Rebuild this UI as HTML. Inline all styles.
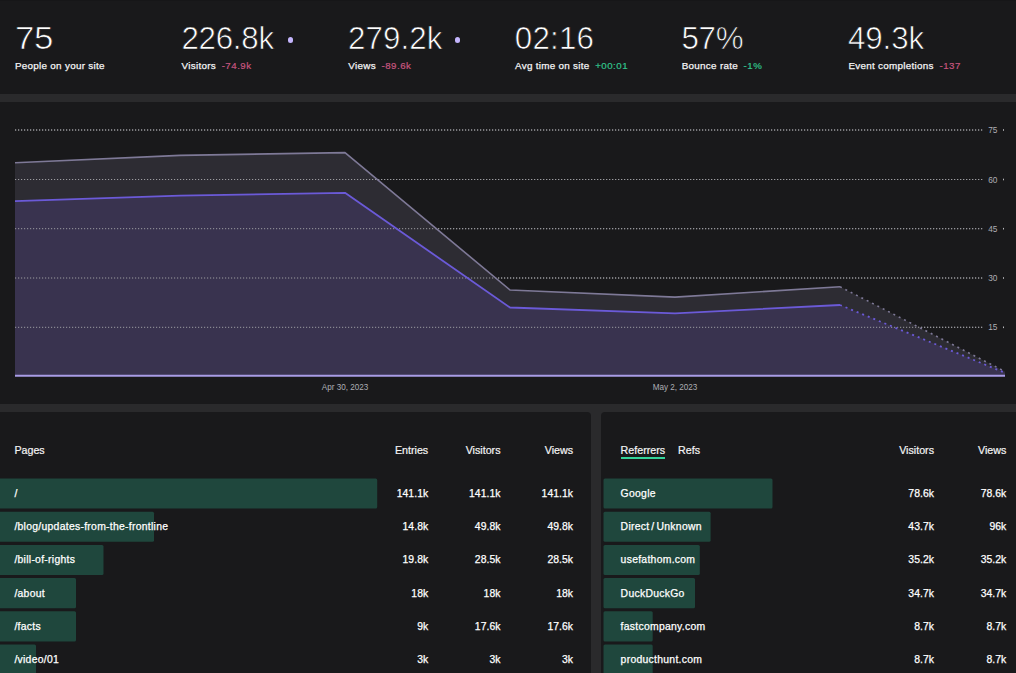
<!DOCTYPE html>
<html><head><meta charset="utf-8"><title>Dashboard</title>
<style>
html,body{margin:0;padding:0;background:#2a2a2c;}
body{width:1016px;height:673px;position:relative;overflow:hidden;font-family:"Liberation Sans",sans-serif;color:#fff;}
.panel{position:absolute;background:#19191b;}
.m{position:absolute;top:0;white-space:nowrap}
.n{position:absolute;left:0;top:20.5px;font-size:31.3px;line-height:36px;color:#fff;letter-spacing:-0.3px;-webkit-text-stroke:0.7px #19191b;paint-order:fill stroke}
.l{position:absolute;left:0.5px;top:58.7px;font-size:9.9px;letter-spacing:0.28px;line-height:14px;color:#f4f4f5;-webkit-text-stroke:0.25px #f4f4f5}
.l span{margin-left:2.57px;font-size:9.7px;letter-spacing:0.5px}
.neg{color:#c6557f;-webkit-text-stroke:0.2px #c6557f}
.pos{color:#31c48d;-webkit-text-stroke:0.2px #31c48d}
.dot{position:absolute;left:106.8px;top:37px;width:5.6px;height:5.6px;border-radius:50%;background:#c4b5fd}
svg text{font-family:"Liberation Sans",sans-serif}
.bar{position:absolute;height:30px;background:#1f473d;border-radius:0 1.5px 1.5px 0}
.t{position:absolute;height:30px;line-height:30px;font-size:10.4px;letter-spacing:0.28px;word-spacing:-1.2px;color:#fff;white-space:nowrap;-webkit-text-stroke:0.25px #fff;margin-top:0.6px}
.v{letter-spacing:0.05px}
.th{position:absolute;top:443px;line-height:14px;font-size:10.7px;color:#f4f4f5;white-space:nowrap;-webkit-text-stroke:0.2px #f4f4f5}
</style></head><body>
<div class="panel" style="left:0;top:0;width:1016px;height:94px;border-top:1px solid #161618;box-sizing:border-box"></div>
<div class="panel" style="left:0;top:102px;width:1016px;height:302px"></div>
<div class="panel" style="left:0;top:412px;width:590.8px;height:270px;border-radius:0 4px 0 0"></div>
<div class="panel" style="left:601px;top:412px;width:420px;height:270px;border-radius:4px 0 0 0"></div>
<div class="m" style="left:14.4px"><div class="n" style="letter-spacing:-0.3px;margin-left:0.3px;transform:scaleX(1.115);transform-origin:0 0">75</div><div class="l">People on your site</div></div><div class="m" style="left:181.1px"><div class="n" style="letter-spacing:-0.25px;margin-left:0.3px">226.8k</div><i class=dot></i><div class="l">Visitors <span class=neg>-74.9k</span></div></div><div class="m" style="left:347.8px"><div class="n" style="letter-spacing:0.1px;margin-left:0.2px">279.2k</div><i class=dot></i><div class="l">Views <span class=neg>-89.6k</span></div></div><div class="m" style="left:514.5px"><div class="n" style="letter-spacing:0.2px;margin-left:0.3px">02:16</div><div class="l">Avg time on site <span class=pos>+00:01</span></div></div><div class="m" style="left:681.2px"><div class="n" style="letter-spacing:-0.3px;margin-left:0.3px">57%</div><div class="l">Bounce rate <span class=pos>-1%</span></div></div><div class="m" style="left:847.9px"><div class="n" style="letter-spacing:-0.1px;margin-left:0.1px">49.3k</div><div class="l">Event completions <span class=neg>-137</span></div></div>
<svg class="chart" width="1016" height="302" viewBox="0 102 1016 302" style="position:absolute;left:0;top:102px"><line x1="15" x2="984" y1="130" y2="130" stroke="#9c9ca0" stroke-width="1" stroke-dasharray="1.2 1.8"/><text x="997.4" y="133" text-anchor="end" font-size="8.3" fill="#aeaeb4">75</text><rect x="1003" y="129.2" width="1" height="1.6" fill="#b8b8bc"/><line x1="15" x2="984" y1="179.5" y2="179.5" stroke="#9c9ca0" stroke-width="1" stroke-dasharray="1.2 1.8"/><text x="997.4" y="182.5" text-anchor="end" font-size="8.3" fill="#aeaeb4">60</text><rect x="1003" y="178.7" width="1" height="1.6" fill="#b8b8bc"/><line x1="15" x2="984" y1="228.7" y2="228.7" stroke="#9c9ca0" stroke-width="1" stroke-dasharray="1.2 1.8"/><text x="997.4" y="231.7" text-anchor="end" font-size="8.3" fill="#aeaeb4">45</text><rect x="1003" y="227.89999999999998" width="1" height="1.6" fill="#b8b8bc"/><line x1="15" x2="984" y1="278" y2="278" stroke="#9c9ca0" stroke-width="1" stroke-dasharray="1.2 1.8"/><text x="997.4" y="281" text-anchor="end" font-size="8.3" fill="#aeaeb4">30</text><rect x="1003" y="277.2" width="1" height="1.6" fill="#b8b8bc"/><line x1="15" x2="984" y1="327.3" y2="327.3" stroke="#9c9ca0" stroke-width="1" stroke-dasharray="1.2 1.8"/><text x="997.4" y="330.3" text-anchor="end" font-size="8.3" fill="#aeaeb4">15</text><rect x="1003" y="326.5" width="1" height="1.6" fill="#b8b8bc"/><polygon points="15,162.8 180,155.4 345,152.6 510,290 675,297.1 840,286.7 1005,371.5 1005,375.8 15,375.8" fill="#2d2c33"/><polygon points="15,201.2 180,195.6 345,192.8 510,307.5 675,313.4 840,305 1005,372.8 1005,375.8 15,375.8" fill="#39334f"/><line x1="15" x2="984" y1="130" y2="130" stroke="#9c9ca0" stroke-width="1" stroke-dasharray="1.2 1.8"/><line x1="15" x2="984" y1="179.5" y2="179.5" stroke="#9c9ca0" stroke-width="1" stroke-dasharray="1.2 1.8"/><line x1="15" x2="984" y1="228.7" y2="228.7" stroke="#9c9ca0" stroke-width="1" stroke-dasharray="1.2 1.8"/><line x1="15" x2="984" y1="278" y2="278" stroke="#9c9ca0" stroke-width="1" stroke-dasharray="1.2 1.8"/><line x1="15" x2="984" y1="327.3" y2="327.3" stroke="#9c9ca0" stroke-width="1" stroke-dasharray="1.2 1.8"/><polyline points="15,162.8 180,155.4 345,152.6 510,290 675,297.1 840,286.7" fill="none" stroke="#7e7997" stroke-width="1.6" stroke-linejoin="round"/><polyline points="840,286.7 1005,371.5" fill="none" stroke="#7e7997" stroke-width="1.6" stroke-dasharray="2 4"/><polyline points="15,201.2 180,195.6 345,192.8 510,307.5 675,313.4 840,305" fill="none" stroke="#6b5ad8" stroke-width="1.8" stroke-linejoin="round"/><polyline points="840,305 1005,372.8" fill="none" stroke="#6b5ad8" stroke-width="1.8" stroke-dasharray="2 4"/><line x1="15" x2="1005" y1="375.8" y2="375.8" stroke="#a99ce6" stroke-width="2"/><text x="345" y="390" text-anchor="middle" font-size="8.15" fill="#aeaeb4">Apr 30, 2023</text><text x="675" y="390" text-anchor="middle" font-size="8.15" fill="#aeaeb4">May 2, 2023</text></svg>
<div class="th" style="left:14.4px">Pages</div>
<div class="th" style="right:587.8px">Entries</div>
<div class="th" style="right:515.5px">Visitors</div>
<div class="th" style="right:442.9px">Views</div>
<div class="th" style="left:620.6px">Referrers</div>
<div style="position:absolute;left:620.6px;top:456.7px;width:44.4px;height:2px;background:#34d399"></div>
<div class="th" style="left:678px">Refs</div>
<div class="th" style="right:82.0px">Visitors</div>
<div class="th" style="right:9.7px">Views</div>
<svg width="1016" height="673" style="position:absolute;left:0;top:0" fill="#1f473d"><rect x="-3" y="478.5" width="380.2" height="30.1" rx="1.5"/><rect x="-3" y="511.7" width="157" height="30.1" rx="1.5"/><rect x="-3" y="544.9" width="106.5" height="30.1" rx="1.5"/><rect x="-3" y="578.1" width="79" height="30.1" rx="1.5"/><rect x="-3" y="611.3" width="79" height="30.1" rx="1.5"/><rect x="-3" y="644.5" width="39" height="30.1" rx="1.5"/><rect x="603.5" y="478.5" width="169.0" height="30.1" rx="1.5"/><rect x="603.5" y="511.7" width="107.1" height="30.1" rx="1.5"/><rect x="603.5" y="544.9" width="96.3" height="30.1" rx="1.5"/><rect x="603.5" y="578.1" width="91.5" height="30.1" rx="1.5"/><rect x="603.5" y="611.3" width="49.2" height="30.1" rx="1.5"/><rect x="603.5" y="644.5" width="49.2" height="30.1" rx="1.5"/></svg>
<div class="t" style="left:14.4px;top:478.5px">/</div><div class="t v" style="right:587.8px;top:478.5px">141.1k</div><div class="t v" style="right:515.5px;top:478.5px">141.1k</div><div class="t v" style="right:442.9px;top:478.5px">141.1k</div><div class="t" style="left:14.4px;top:511.7px">/blog/updates-from-the-frontline</div><div class="t v" style="right:587.8px;top:511.7px">14.8k</div><div class="t v" style="right:515.5px;top:511.7px">49.8k</div><div class="t v" style="right:442.9px;top:511.7px">49.8k</div><div class="t" style="left:14.4px;top:544.9px">/bill-of-rights</div><div class="t v" style="right:587.8px;top:544.9px">19.8k</div><div class="t v" style="right:515.5px;top:544.9px">28.5k</div><div class="t v" style="right:442.9px;top:544.9px">28.5k</div><div class="t" style="left:14.4px;top:578.1px">/about</div><div class="t v" style="right:587.8px;top:578.1px">18k</div><div class="t v" style="right:515.5px;top:578.1px">18k</div><div class="t v" style="right:442.9px;top:578.1px">18k</div><div class="t" style="left:14.4px;top:611.3px">/facts</div><div class="t v" style="right:587.8px;top:611.3px">9k</div><div class="t v" style="right:515.5px;top:611.3px">17.6k</div><div class="t v" style="right:442.9px;top:611.3px">17.6k</div><div class="t" style="left:14.4px;top:644.5px">/video/01</div><div class="t v" style="right:587.8px;top:644.5px">3k</div><div class="t v" style="right:515.5px;top:644.5px">3k</div><div class="t v" style="right:442.9px;top:644.5px">3k</div><div class="t" style="left:620.6px;top:478.5px">Google</div><div class="t v" style="right:82.0px;top:478.5px">78.6k</div><div class="t v" style="right:9.7px;top:478.5px">78.6k</div><div class="t" style="left:620.6px;top:511.7px">Direct / Unknown</div><div class="t v" style="right:82.0px;top:511.7px">43.7k</div><div class="t v" style="right:9.7px;top:511.7px">96k</div><div class="t" style="left:620.6px;top:544.9px">usefathom.com</div><div class="t v" style="right:82.0px;top:544.9px">35.2k</div><div class="t v" style="right:9.7px;top:544.9px">35.2k</div><div class="t" style="left:620.6px;top:578.1px">DuckDuckGo</div><div class="t v" style="right:82.0px;top:578.1px">34.7k</div><div class="t v" style="right:9.7px;top:578.1px">34.7k</div><div class="t" style="left:620.6px;top:611.3px">fastcompany.com</div><div class="t v" style="right:82.0px;top:611.3px">8.7k</div><div class="t v" style="right:9.7px;top:611.3px">8.7k</div><div class="t" style="left:620.6px;top:644.5px">producthunt.com</div><div class="t v" style="right:82.0px;top:644.5px">8.7k</div><div class="t v" style="right:9.7px;top:644.5px">8.7k</div>
</body></html>
